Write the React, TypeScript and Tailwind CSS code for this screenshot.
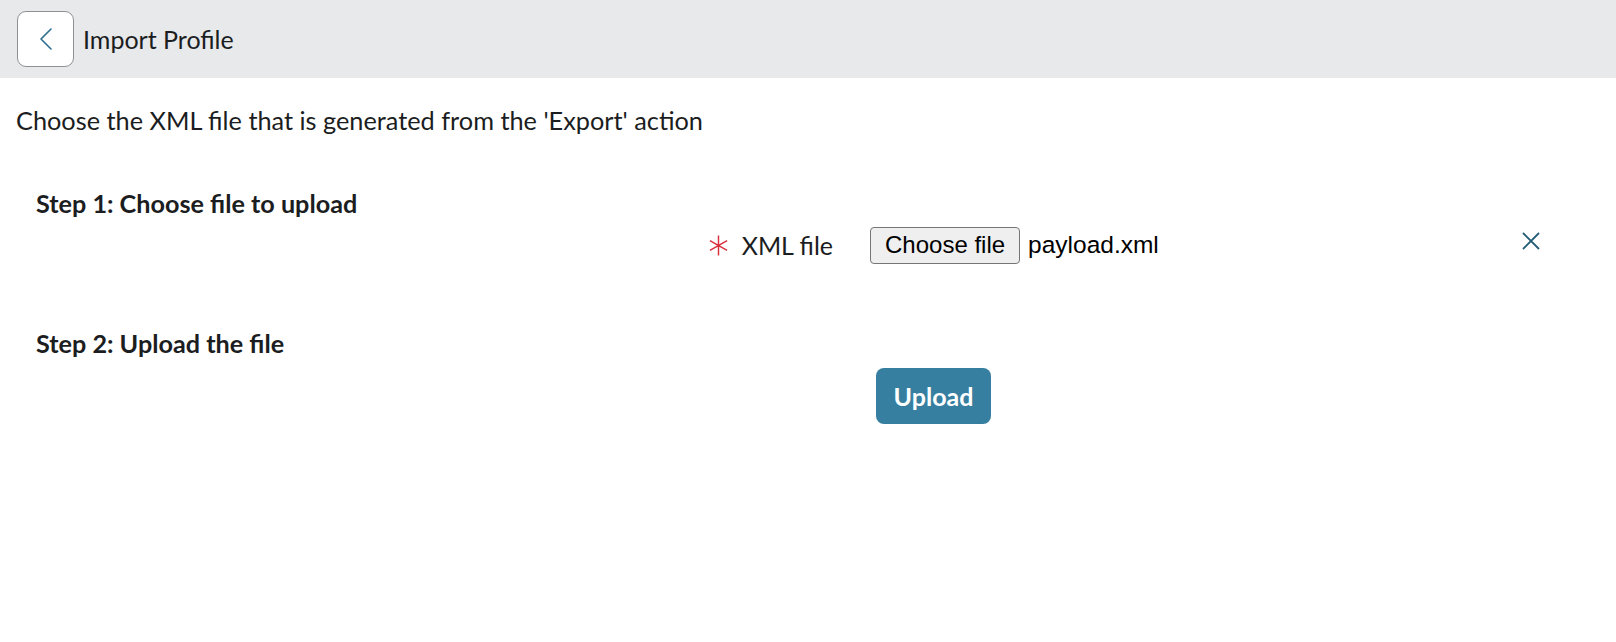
import React from 'react';

const ChevronLeft = () => (
  <svg width="16" height="24" viewBox="0 0 16 24" fill="none" stroke="#2c6e8e" strokeWidth="1.6" strokeLinecap="round" strokeLinejoin="round">
    <path d="M13 2 L3 12 L13 22" />
  </svg>
);

const CloseIcon = () => (
  <svg width="20" height="20" viewBox="0 0 20 20" fill="none" stroke="#235c77" strokeWidth="1.8">
    <path d="M2 2 L18 18 M18 2 L2 18" />
  </svg>
);

const RequiredMark = () => (
  <svg width="23" height="23" viewBox="0 0 22 22" fill="none" stroke="#d9303e" strokeWidth="1.4">
    <path d="M11 1.5 V20.5 M2.8 6.25 L19.2 15.75 M19.2 6.25 L2.8 15.75" />
  </svg>
);

export default function App() {
  return (
    <div className="min-h-screen bg-white text-[#1b1d21] font-['Lato','Noto_Sans',sans-serif]">
      <header className="h-[78px] bg-[#e8e9eb] flex items-center px-[17px] gap-[9px]">
        <button className="w-[57px] h-[56px] bg-white border border-[#8d9196] rounded-[9px] flex items-center justify-center">
          <ChevronLeft />
        </button>
        <h1 className="text-[25px] leading-[30px] text-[#1b1d21]">Import Profile</h1>
      </header>

      <main className="px-4">
        <p className="text-[25.3px] leading-[30px] mt-[27px]">Choose the XML file that is generated from the 'Export' action</p>

        <section className="px-5 mt-[53px]">
          <h2 className="text-[25.2px] font-bold leading-[30px]">Step 1: Choose file to upload</h2>
          <div className="flex items-center mt-[8px] h-[38px]">
            <div className="w-[797px] flex items-center justify-end gap-[12px]">
              <RequiredMark />
              <span className="text-[25px] leading-[30px]">XML file</span>
            </div>
            <div className="ml-[37px] flex items-center gap-[8px] font-['Liberation_Sans',sans-serif]">
              <button className="h-[37px] px-[14px] bg-[#efefef] border border-[#767676] rounded-[4px] text-[24px] leading-none text-black">Choose file</button>
              <span className="text-[24.5px] leading-none text-black">payload.xml</span>
            </div>
            <div className="ml-auto mr-[39px] flex items-center -mt-[8px]">
              <CloseIcon />
            </div>
          </div>

          <h2 className="text-[25.2px] font-bold leading-[30px] mt-[64px]">Step 2: Upload the file</h2>
          <div className="mt-[10px] pl-[840px]">
            <button className="w-[115px] h-[56px] bg-[#377fa0] rounded-[8px] text-white text-[25px] font-bold leading-none">Upload</button>
          </div>
        </section>
      </main>
    </div>
  );
}
